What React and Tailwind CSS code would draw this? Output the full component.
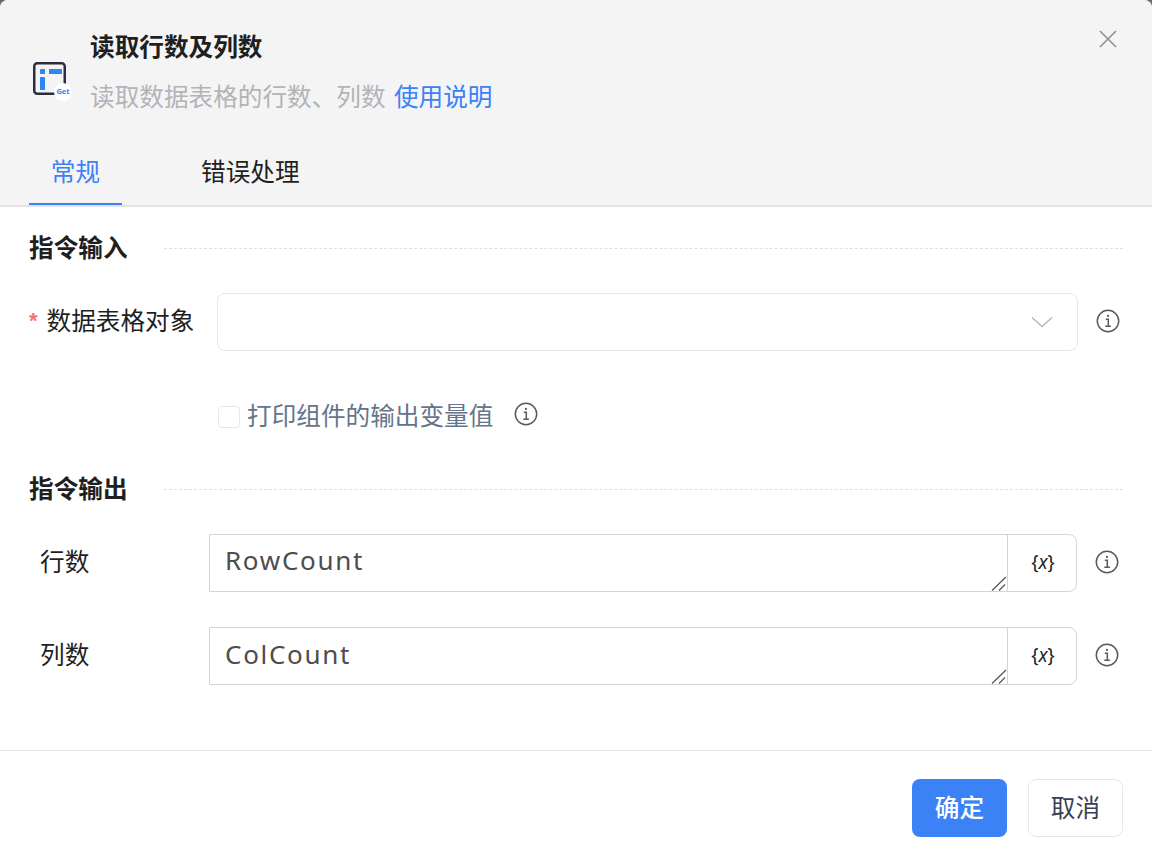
import React from "react";

const cjk = "font-['Noto_Sans','Noto_Sans_CJK_SC',sans-serif]";

function Info() {
  return (
    <svg width="24" height="24" viewBox="0 0 24 24" fill="none" stroke="#595959" className="shrink-0">
      <circle cx="12" cy="12" r="10.7" strokeWidth="1.5" />
      <path d="M9.8 10.2h2.5v7M9.3 17.2h5.6" strokeWidth="1.5" />
      <circle cx="12" cy="6.9" r="1.1" fill="#595959" stroke="none" />
    </svg>
  );
}

function Logo() {
  return (
    <div className="relative mt-[60px] h-[41px] w-[40px] shrink-0">
      <svg width="40" height="38" viewBox="0 0 40 38" fill="none">
        <rect x="3.25" y="3.25" width="30.5" height="30.5" rx="3" stroke="#2b2f3d" strokeWidth="2.5" />
        <rect x="9" y="9" width="5" height="5" rx="0.5" fill="#2f86f6" />
        <rect x="18" y="9" width="13" height="5" rx="0.5" fill="#2f86f6" />
        <rect x="9" y="17" width="5" height="13" rx="0.5" fill="#2f86f6" />
      </svg>
      <div className="absolute left-[23px] top-[23px] flex h-[18px] w-[18px] items-center justify-center rounded-full bg-white text-[7.5px] font-bold text-[#3b82f6]">
        Get
      </div>
    </div>
  );
}

function SectionTitle({ children }) {
  return (
    <div className="flex h-[32px] items-center">
      <div className="w-[135px] shrink-0 -translate-y-[1px] text-[24.64px] leading-[32px] font-bold text-[#1f1f1f]">{children}</div>
      <div className="h-0 flex-1 -translate-y-[1px] border-t border-dashed border-[#e0e0e0]" />
    </div>
  );
}

function Resize() {
  return (
    <svg width="16" height="15" viewBox="0 0 16 15" className="absolute bottom-0 right-0" stroke="#555" strokeWidth="1.2" fill="none">
      <path d="M1 14.5 L15 1 M8 14.5 L14 8.5" />
    </svg>
  );
}

function OutputRow({ label, value, textTop }) {
  return (
    <div className="flex items-center">
      <div className="w-[180px] shrink-0 -translate-y-[1px] pl-[11px] text-[24.64px] leading-[32px] text-[#1f1f1f]">{label}</div>
      <div className="flex h-[57.5px] w-[868px] shrink-0 rounded-r-[8px] border border-[#d4d4d4]">
        <div className={`relative flex-1 border-r border-[#d4d4d4] pl-[15px] ${textTop} text-[26px] leading-[36px] tracking-[1.7px] text-[#4d4d4d]`}>
          {value}
          <Resize />
        </div>
        <div className="flex w-[68px] shrink-0 items-center justify-center pb-[2px] pl-[2px] text-[19px] text-[#1f1f1f]">
          {"{"}<i>x</i>{"}"}
        </div>
      </div>
      <div className="ml-[18px] -translate-y-[1px]"><Info /></div>
    </div>
  );
}

export default function App() {
  return (
    <div className={`${cjk} h-[866px] w-[1152px] overflow-hidden bg-[#6b6b6b]`}>
      <div className="flex h-full flex-col rounded-t-[8px] bg-white">
        <header className="h-[207px] shrink-0 rounded-t-[8px] border-b-2 border-[#e3e3e3] bg-[#f4f4f5]">
          <div className="relative flex h-[140px] items-start pl-[31px]">
            <Logo />
            <div className="ml-[19px] pt-[31px]">
              <div className="text-[24.64px] leading-[32px] font-bold text-[#1f1f1f]">读取行数及列数</div>
              <div className="mt-[17px] text-[24.64px] leading-[34px] text-[#b3b3b8]">
                读取数据表格的行数、列数 <span className="ml-[2px] text-[#3b82f6]">使用说明</span>
              </div>
            </div>
            <svg width="20" height="20" viewBox="0 0 20 20" className="absolute right-[34px] top-[29px]" stroke="#8f8f94" strokeWidth="1.6" fill="none">
              <path d="M2 2 L18 18 M18 2 L2 18" />
            </svg>
          </div>
          <div className="flex pl-[29px] text-[24.64px] leading-[34px]">
            <div className="flex h-[65px] w-[93px] justify-center border-b-[2px] border-[#3b82f6] pt-[15px] text-[#3b82f6]">常规</div>
            <div className="ml-[79px] pt-[15px] text-[#1f1f1f]">错误处理</div>
          </div>
        </header>

        <main className="flex-1 px-[29px] pt-[26px]">
          <SectionTitle>指令输入</SectionTitle>
          <div className="mt-[28px] flex items-center">
            <div className="flex w-[188px] shrink-0 -translate-y-[1px] items-center text-[24.64px] leading-[32px] text-[#1f1f1f]">
              <span className="mr-[9px] font-['Liberation_Sans',sans-serif] text-[22px] font-bold text-[#f87171]">*</span>数据表格对象
            </div>
            <div className="flex h-[58px] w-[861px] shrink-0 items-center justify-end rounded-[8px] border border-[#e5e7eb] pr-[24px]">
              <svg width="22" height="12" viewBox="0 0 22 12" stroke="#b8b8bc" strokeWidth="1.5" fill="none">
                <path d="M1 1.5 L11 10.5 L21 1.5" />
              </svg>
            </div>
            <div className="ml-[18px] -translate-y-[1px]"><Info /></div>
          </div>
          <div className="mt-[48px] flex items-center pl-[189px]">
            <div className="h-[22px] w-[22px] translate-y-[1px] rounded-[4px] border border-[#e5e7eb] bg-white" />
            <div className="ml-[7px] text-[24.64px] leading-[34px] text-[#64748b]">打印组件的输出变量值</div>
            <div className="ml-[21px] -translate-y-[2px]"><Info /></div>
          </div>
          <div className="mt-[41px]"><SectionTitle>指令输出</SectionTitle></div>
          <div className="mt-[28px] flex flex-col gap-[35.5px]">
            <OutputRow label="行数" value="RowCount" textTop="pt-[7px]" />
            <OutputRow label="列数" value="ColCount" textTop="pt-[8px]" />
          </div>
        </main>

        <footer className="flex h-[116px] shrink-0 justify-end gap-[21px] border-t border-[#e5e7eb] pr-[29px] pt-[28px]">
          <button className="h-[58px] w-[95px] rounded-[8px] bg-[#3b82f6] text-[24.64px] font-medium text-white">确定</button>
          <button className="h-[58px] w-[95px] rounded-[8px] border border-[#e5e7eb] bg-white text-[24.64px] text-[#374151]">取消</button>
        </footer>
      </div>
    </div>
  );
}
